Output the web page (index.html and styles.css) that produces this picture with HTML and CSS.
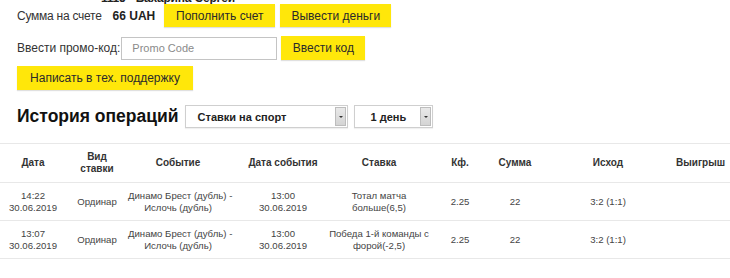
FILE: index.html
```html
<!DOCTYPE html>
<html lang="ru">
<head>
<meta charset="utf-8">
<link rel="stylesheet" href="styles.css">
</head>
<body>
<div class="page">
  <div class="owner"><span class="owner-text">1115 - Бахарина Сергей</span></div>
  <div class="row row-balance">
    <span class="label label-sum">Сумма на счете</span>
    <span class="amount">66 UAH</span>
    <div class="btns">
      <button class="btn">Пополнить счет</button>
      <button class="btn">Вывести деньги</button>
    </div>
  </div>
  <div class="row row-promo">
    <span class="label">Ввести промо-код:</span>
    <input class="promo" type="text" placeholder="Promo Code">
    <button class="btn">Ввести код</button>
  </div>
  <div class="row row-support">
    <button class="btn btn-support">Написать в тех. поддержку</button>
  </div>
  <div class="row row-history">
    <h2 class="title">История операций</h2>
    <div class="select select-type"><span class="select-text">Ставки на спорт</span><span class="select-arrow"></span></div>
    <div class="select select-period"><span class="select-text">1 день</span><span class="select-arrow"></span></div>
  </div>
</div>
<table class="ops">
  <colgroup>
    <col class="c1"><col class="c2"><col class="c3"><col class="c4"><col class="c5"><col class="c6"><col class="c7"><col class="c8"><col class="c9">
  </colgroup>
  <thead>
    <tr>
      <th>Дата</th>
      <th>Вид<br>ставки</th>
      <th>Событие</th>
      <th class="k4">Дата события</th>
      <th>Ставка</th>
      <th>Кф.</th>
      <th>Сумма</th>
      <th>Исход</th>
      <th class="k9">Выигрыш</th>
    </tr>
  </thead>
  <tbody>
    <tr>
      <td>14:22<br>30.06.2019</td>
      <td>Ординар</td>
      <td>Динамо Брест (дубль) -<br>Ислочь (дубль)</td>
      <td class="k4">13:00<br>30.06.2019</td>
      <td>Тотал матча<br>больше(6,5)</td>
      <td>2.25</td>
      <td>22</td>
      <td>3:2 (1:1)</td>
      <td class="k9"></td>
    </tr>
    <tr>
      <td>13:07<br>30.06.2019</td>
      <td>Ординар</td>
      <td>Динамо Брест (дубль) -<br>Ислочь (дубль)</td>
      <td class="k4">13:00<br>30.06.2019</td>
      <td>Победа 1-й команды с<br>форой(-2,5)</td>
      <td>2.25</td>
      <td>22</td>
      <td>3:2 (1:1)</td>
      <td class="k9"></td>
    </tr>
  </tbody>
</table>
</body>
</html>
```
FILE: styles.css
```css
* { box-sizing: border-box; }
html, body { margin: 0; padding: 0; }
body {
  width: 730px;
  height: 278px;
  overflow: hidden;
  background: #fff;
  color: #333;
  font-family: "Liberation Sans", Arial, sans-serif;
  font-size: 12px;
}
.page { padding-left: 17px; }
.owner {
  height: 4px;
  overflow: hidden;
  padding-left: 84px;
}
.owner-text {
  display: block;
  margin-top: -9px;
  font-weight: bold;
  font-size: 12px;
  line-height: 14px;
  color: #222;
  letter-spacing: -0.2px;
}
.row {
  display: flex;
  align-items: center;
}
.row-balance { height: 23px; }
.row-promo { height: 24px; margin-top: 9px; }
.row-support { height: 24px; margin-top: 6px; }
.row-history { height: 23px; margin-top: 15px; }
.label { color: #333; }
.label-sum { letter-spacing: -0.25px; }
.amount {
  font-weight: bold;
  margin-left: 11px;
  color: #222;
}
.btns { display: flex; gap: 5px; margin-left: 9px; }
.btn {
  height: 23px;
  padding: 0 12px;
  border: none;
  background: #ffe70a;
  color: #2a2a2a;
  font-family: "Liberation Sans", Arial, sans-serif;
  font-size: 12px;
  box-shadow: 0 1px 1px rgba(0,0,0,0.12);
  cursor: pointer;
}
.btns .btn { width: 111px; padding: 0; }
.row-promo .btn { height: 24px; margin-left: 4px; width: 84px; padding: 0; }
.btn-support { height: 24px; width: 176px; padding: 0; }
.promo {
  margin-left: 1px;
  width: 156px;
  height: 23px;
  border: 1px solid #c4c4c4;
  padding: 0 10px;
  font-family: "Liberation Sans", Arial, sans-serif;
  font-size: 11px;
  color: #333;
  outline: none;
}
.promo::placeholder { color: #8a8a8a; }
.title {
  margin: 0;
  font-size: 17.5px;
  font-weight: bold;
  color: #111;
}
.select {
  height: 23px;
  border: 1px solid #cfcfcf;
  background: #fff;
  display: flex;
  align-items: center;
  justify-content: space-between;
  padding: 1px 1px 1px 0;
  box-shadow: 0 1px 1px rgba(0,0,0,0.06);
}
.select-type { width: 163px; margin-left: 6px; }
.select-period { width: 79px; margin-left: 6px; }
.select-text {
  font-size: 11px;
  font-weight: bold;
  color: #222;
  padding-left: 12px;
}
.select-period .select-text { padding-left: 16px; }
.select-arrow {
  width: 11px;
  height: 19px;
  background: linear-gradient(#e9e9e9, #d4d4d4);
  border: 1px solid #bdbdbd;
  position: relative;
}
.select-arrow::after {
  content: "";
  position: absolute;
  left: 3px;
  top: 8px;
  border-left: 2px solid transparent;
  border-right: 2px solid transparent;
  border-top: 2px solid #333;
}
.ops {
  margin-top: 15px;
  width: 730px;
  border-collapse: collapse;
  table-layout: fixed;
  font-size: 9.6px;
  color: #444;
}
.c1 { width: 66px; }
.c2 { width: 62px; }
.c3 { width: 100px; }
.c4 { width: 100px; }
.c5 { width: 102px; }
.c6 { width: 60px; }
.c7 { width: 50px; }
.c8 { width: 136px; }
.c9 { width: 54px; }
.ops th, .ops td {
  text-align: center;
  vertical-align: middle;
  padding: 0;
  line-height: 12px;
  white-space: nowrap;
  border-bottom: 1px solid #e8e8e8;
}
.ops .k4 { padding-left: 10px; }
.ops .k9 { padding-right: 10px; }
.ops thead tr { border-top: 1px solid #e8e8e8; }
.ops th {
  height: 39px;
  font-weight: bold;
  font-size: 10px;
  color: #333;
}
.ops td { height: 38px; }
```
